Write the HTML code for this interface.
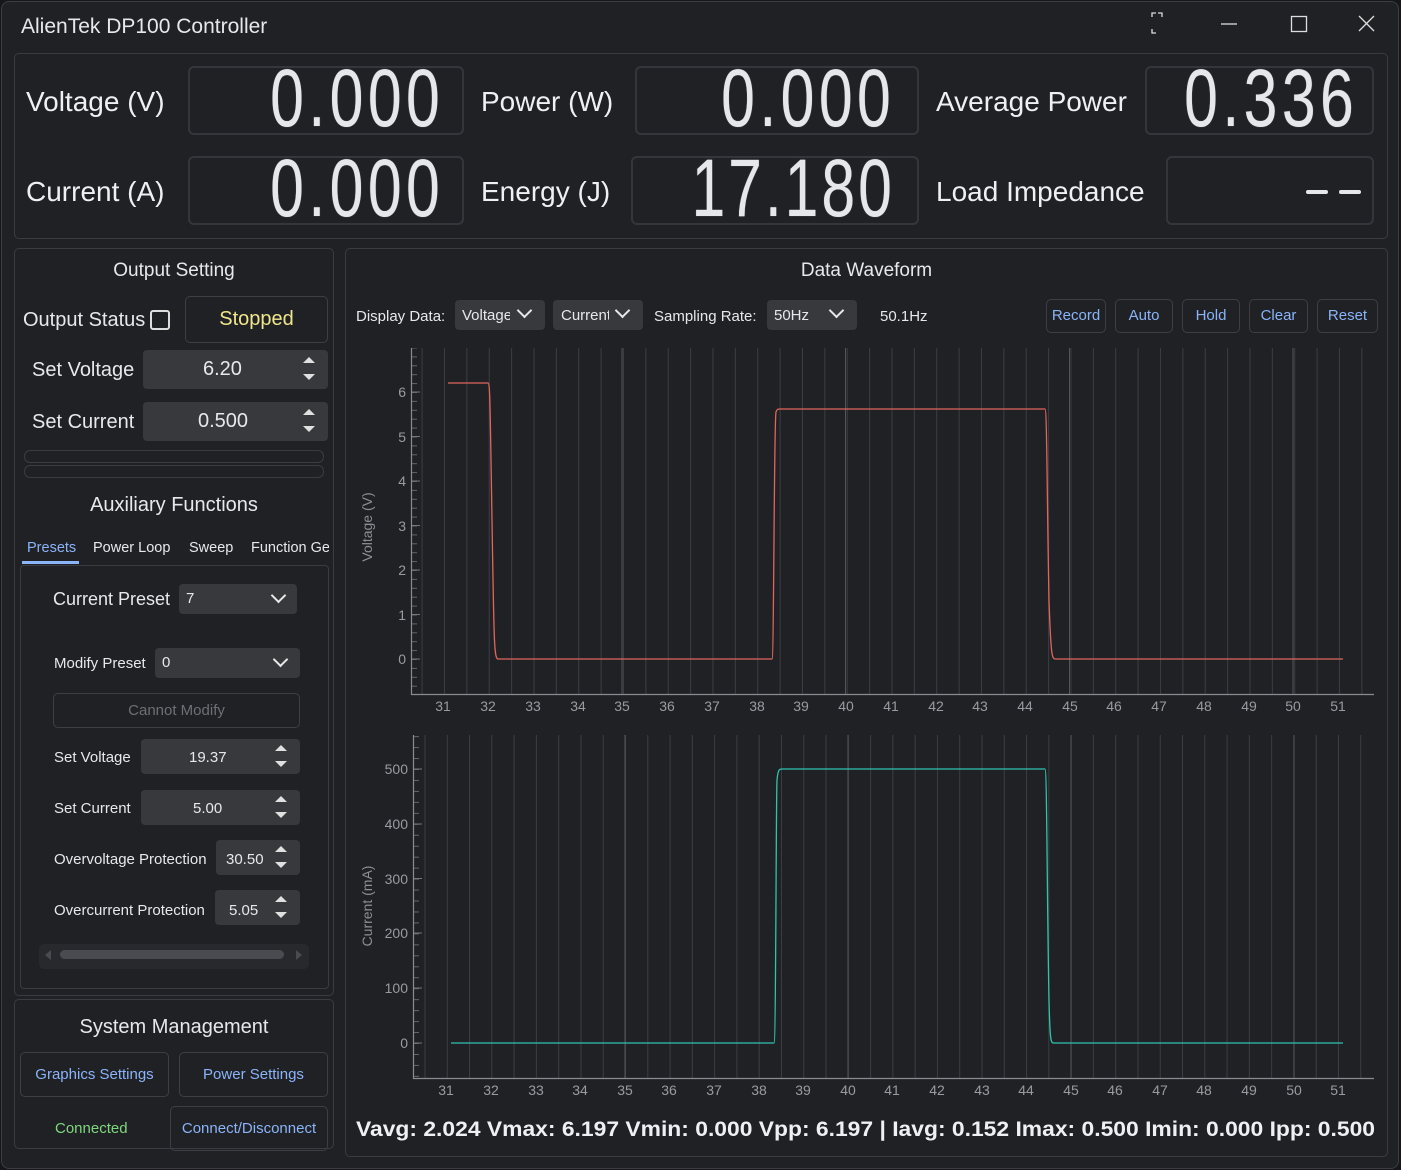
<!DOCTYPE html>
<html><head><meta charset="utf-8"><style>
*{box-sizing:border-box;margin:0;padding:0}
body{width:1401px;height:1170px;background:#16171a;font-family:"Liberation Sans",sans-serif;color:#e8e8ec;position:relative;overflow:hidden}
.win{position:absolute;left:1px;top:1px;width:1398px;height:1168px;background:#202125;border:1px solid #3c3d42;border-radius:8px}
.a{position:absolute;white-space:nowrap}
.box{position:absolute;border:1px solid #3b3c41;border-radius:5px}
.lcd{position:absolute;border:2px solid #35363b;border-radius:6px;overflow:hidden}
.dig{position:absolute;right:0;top:-10px;font-size:82px;line-height:1;color:#e6e7ea;transform:scaleX(.74);transform-origin:right top;letter-spacing:6px;text-shadow:0 0 1px #888}
.lbl{font-size:28px;color:#eef0f4}
.spin{position:absolute;background:#38393d;border-radius:4px}
.btn{position:absolute;border:1px solid #3e3f44;border-radius:5px;text-align:center;color:#8ab4f8;font-size:15px}
.arr{position:absolute;width:0;height:0;border-left:6px solid transparent;border-right:6px solid transparent}
.up{border-bottom:6px solid #e0e0e0}.dn{border-top:6px solid #e0e0e0}
.chev{position:absolute;width:11px;height:11px;border-right:2.5px solid #e8e8e8;border-bottom:2.5px solid #e8e8e8;transform:rotate(45deg)}
.combo{position:absolute;background:#38393d;border-radius:4px;color:#e8e8ec;font-size:15px}
</style></head><body>
<div class="win"></div>
<div class="a" style="left:21px;top:15px;font-size:21px">AlienTek DP100 Controller</div>
<svg class="a" style="left:1140px;top:10px" width="250" height="30">
<path d="M12 7 v-4 h4 M22 7 v-4 h-4 M12 19 v4 h4" fill="none" stroke="#ddd" stroke-width="1.3"/>
<line x1="81" y1="14" x2="97" y2="14" stroke="#ddd" stroke-width="1.3"/>
<rect x="151.5" y="6.5" width="15" height="15" fill="none" stroke="#ddd" stroke-width="1.3"/>
<path d="M219 6 L234 21 M234 6 L219 21" stroke="#ddd" stroke-width="1.3"/>
</svg>

<div class="box" style="left:14px;top:53px;width:1374px;height:186px"></div>
<div class="a lbl" style="left:26px;top:86px">Voltage (V)</div>
<div class="a lbl" style="left:26px;top:176px">Current (A)</div>
<div class="a lbl" style="left:481px;top:86px">Power (W)</div>
<div class="a lbl" style="left:481px;top:176px">Energy (J)</div>
<div class="a lbl" style="left:936px;top:86px">Average Power</div>
<div class="a lbl" style="left:936px;top:176px">Load Impedance</div>
<div class="lcd" style="left:188px;top:66px;width:276px;height:69px"><div class="dig" style="right:18px">0.000</div></div>
<div class="lcd" style="left:188px;top:156px;width:276px;height:69px"><div class="dig" style="right:18px">0.000</div></div>
<div class="lcd" style="left:635px;top:66px;width:284px;height:69px"><div class="dig" style="right:22px">0.000</div></div>
<div class="lcd" style="left:631px;top:156px;width:288px;height:69px"><div class="dig" style="right:22px;letter-spacing:4px">17.180</div></div>
<div class="lcd" style="left:1145px;top:66px;width:229px;height:69px"><div class="dig" style="right:14px">0.336</div></div>
<div class="lcd" style="left:1166px;top:156px;width:208px;height:69px">
<div class="a" style="left:138px;top:32px;width:22px;height:4px;background:#e6e7ea;border-radius:2px"></div>
<div class="a" style="left:171px;top:32px;width:22px;height:4px;background:#e6e7ea;border-radius:2px"></div></div>

<div class="box" style="left:14px;top:248px;width:320px;height:748px"></div>
<div class="a" style="left:14px;width:320px;text-align:center;top:260px;font-size:19px">Output Setting</div>
<div class="a" style="left:23px;top:309px;font-size:20px">Output Status</div>
<div class="a" style="left:150px;top:310px;width:20px;height:20px;border:2px solid #ddd;border-radius:3px"></div>
<div class="btn" style="left:185px;top:296px;width:143px;height:47px;line-height:45px;color:#f0e68c;font-size:20px">Stopped</div>
<div class="a" style="left:32px;top:359px;font-size:20px">Set Voltage</div>
<div class="spin" style="left:143px;top:350px;width:185px;height:39px"><div class="a" style="left:60px;top:8px;font-size:20px">6.20</div><div class="arr up" style="left:160px;top:7px"></div><div class="arr dn" style="left:160px;top:24px"></div></div>
<div class="a" style="left:32px;top:411px;font-size:20px">Set Current</div>
<div class="spin" style="left:143px;top:402px;width:185px;height:39px"><div class="a" style="left:55px;top:8px;font-size:20px">0.500</div><div class="arr up" style="left:160px;top:7px"></div><div class="arr dn" style="left:160px;top:24px"></div></div>
<div class="a" style="left:24px;top:450px;width:300px;height:13px;border:1px solid #3b3c41;border-radius:6px"></div>
<div class="a" style="left:24px;top:465px;width:300px;height:13px;border:1px solid #3b3c41;border-radius:6px"></div>
<div class="a" style="left:14px;width:320px;text-align:center;top:494px;font-size:20px">Auxiliary Functions</div>
<div class="a" style="left:27px;top:540px;font-size:14.5px;color:#8ab4f8">Presets</div>
<div class="a" style="left:22px;top:561px;width:57px;height:3px;background:#8ab4f8"></div>
<div class="a" style="left:93px;top:540px;font-size:14.5px">Power Loop</div>
<div class="a" style="left:189px;top:540px;font-size:14.5px">Sweep</div>
<div class="a" style="left:251px;top:540px;font-size:14.5px;width:78px;overflow:hidden">Function Ge</div>
<div class="a" style="left:20px;top:565px;width:309px;height:424px;border:1px solid #3b3c41;border-radius:4px"></div>
<div class="a" style="left:53px;top:589px;font-size:18px">Current Preset</div>
<div class="combo" style="left:179px;top:584px;width:118px;height:30px"><div class="a" style="left:7px;top:6px">7</div><div class="chev" style="left:94px;top:6px"></div></div>
<div class="a" style="left:54px;top:655px;font-size:15px">Modify Preset</div>
<div class="combo" style="left:155px;top:648px;width:145px;height:30px"><div class="a" style="left:7px;top:6px">0</div><div class="chev" style="left:120px;top:6px"></div></div>
<div class="btn" style="left:53px;top:693px;width:247px;height:35px;line-height:33px;color:#6e6f74">Cannot Modify</div>
<div class="a" style="left:54px;top:749px;font-size:15px">Set Voltage</div>
<div class="spin" style="left:141px;top:739px;width:159px;height:35px"><div class="a" style="left:48px;top:10px;font-size:15px">19.37</div><div class="arr up" style="left:134px;top:6px"></div><div class="arr dn" style="left:134px;top:22px"></div></div>
<div class="a" style="left:54px;top:800px;font-size:15px">Set Current</div>
<div class="spin" style="left:141px;top:790px;width:159px;height:35px"><div class="a" style="left:52px;top:10px;font-size:15px">5.00</div><div class="arr up" style="left:134px;top:6px"></div><div class="arr dn" style="left:134px;top:22px"></div></div>
<div class="a" style="left:54px;top:851px;font-size:15px">Overvoltage Protection</div>
<div class="spin" style="left:216px;top:840px;width:84px;height:35px"><div class="a" style="left:10px;top:11px;font-size:15px">30.50</div><div class="arr up" style="left:59px;top:6px"></div><div class="arr dn" style="left:59px;top:22px"></div></div>
<div class="a" style="left:54px;top:902px;font-size:15px">Overcurrent Protection</div>
<div class="spin" style="left:215px;top:890px;width:85px;height:35px"><div class="a" style="left:14px;top:12px;font-size:15px">5.05</div><div class="arr up" style="left:60px;top:6px"></div><div class="arr dn" style="left:60px;top:22px"></div></div>
<div class="a" style="left:39px;top:944px;width:270px;height:25px;background:#28292d;border-radius:5px">
<div class="a" style="left:21px;top:6px;width:224px;height:9px;background:#4a4b50;border-radius:5px"></div>
<div class="a" style="left:6px;top:6px;border-top:5px solid transparent;border-bottom:5px solid transparent;border-right:6px solid #4a4b50"></div>
<div class="a" style="left:257px;top:6px;border-top:5px solid transparent;border-bottom:5px solid transparent;border-left:6px solid #4a4b50"></div></div>

<div class="box" style="left:14px;top:999px;width:320px;height:150px"></div>
<div class="a" style="left:14px;width:320px;text-align:center;top:1016px;font-size:20px">System Management</div>
<div class="btn" style="left:20px;top:1052px;width:149px;height:45px;line-height:43px">Graphics Settings</div>
<div class="btn" style="left:179px;top:1052px;width:149px;height:45px;line-height:43px">Power Settings</div>
<div class="a" style="left:55px;top:1120px;font-size:15px;color:#7fd77f">Connected</div>
<div class="btn" style="left:170px;top:1106px;width:158px;height:45px;line-height:43px">Connect/Disconnect</div>

<div class="box" style="left:345px;top:248px;width:1043px;height:909px"></div>
<div class="a" style="left:345px;width:1043px;text-align:center;top:260px;font-size:19px">Data Waveform</div>
<div class="a" style="left:356px;top:308px;font-size:15px">Display Data:</div>
<div class="combo" style="left:455px;top:300px;width:90px;height:30px"><div class="a" style="left:7px;top:7px;width:48px;overflow:hidden">Voltage</div><div class="chev" style="left:64px;top:5px"></div></div>
<div class="combo" style="left:553px;top:300px;width:90px;height:30px"><div class="a" style="left:8px;top:7px;width:48px;overflow:hidden">Current</div><div class="chev" style="left:64px;top:5px"></div></div>
<div class="a" style="left:654px;top:308px;font-size:15px">Sampling Rate:</div>
<div class="combo" style="left:767px;top:300px;width:90px;height:30px"><div class="a" style="left:7px;top:7px">50Hz</div><div class="chev" style="left:64px;top:5px"></div></div>
<div class="a" style="left:880px;top:308px;font-size:15px">50.1Hz</div>
<div class="btn" style="left:1046px;top:299px;width:60px;height:34px;line-height:32px;overflow:hidden"><span style="display:inline-block;margin-left:-20px;margin-right:-20px">Record</span></div>
<div class="btn" style="left:1115px;top:299px;width:58px;height:34px;line-height:32px">Auto</div>
<div class="btn" style="left:1182px;top:299px;width:58px;height:34px;line-height:32px">Hold</div>
<div class="btn" style="left:1249px;top:299px;width:59px;height:34px;line-height:32px">Clear</div>
<div class="btn" style="left:1317px;top:299px;width:61px;height:34px;line-height:32px">Reset</div>

<svg class="a" style="left:0;top:0" width="1401" height="1170" font-family="Liberation Sans, sans-serif">
<defs>
<pattern id="g1" x="421.6" y="0" width="22.375" height="10" patternUnits="userSpaceOnUse"><line x1="0.5" y1="0" x2="0.5" y2="10" stroke="#3c3d42" stroke-width="1"/></pattern>
<pattern id="g2" x="424.5" y="0" width="22.28" height="10" patternUnits="userSpaceOnUse"><line x1="0.5" y1="0" x2="0.5" y2="10" stroke="#3c3d42" stroke-width="1"/></pattern>
<pattern id="t1" x="0" y="659" width="10" height="8.9" patternUnits="userSpaceOnUse"><line x1="0" y1="0.5" x2="10" y2="0.5" stroke="#666" stroke-width="1"/></pattern>
<pattern id="t2" x="0" y="1043" width="10" height="10.96" patternUnits="userSpaceOnUse"><line x1="0" y1="0.5" x2="10" y2="0.5" stroke="#666" stroke-width="1"/></pattern>
</defs>
<rect x="421" y="348" width="952" height="346" fill="url(#g1)"/>
<g stroke="#55565b"><line x1="622" y1="348" x2="622" y2="694"/><line x1="845.5" y1="348" x2="845.5" y2="694"/><line x1="1069.5" y1="348" x2="1069.5" y2="694"/><line x1="1293" y1="348" x2="1293" y2="694"/></g>
<rect x="412" y="348" width="5" height="346" fill="url(#t1)"/>
<g stroke="#777"><line x1="412" y1="659" x2="420" y2="659"/><line x1="412" y1="614.5" x2="420" y2="614.5"/><line x1="412" y1="570" x2="420" y2="570"/><line x1="412" y1="525.5" x2="420" y2="525.5"/><line x1="412" y1="481" x2="420" y2="481"/><line x1="412" y1="436.5" x2="420" y2="436.5"/><line x1="412" y1="392" x2="420" y2="392"/></g>
<path d="M411.5 348 V694.5 H1374" fill="none" stroke="#8a8b90" stroke-width="1.2"/>
<g fill="#9a9ba0" font-size="14" text-anchor="end"><text x="406" y="664">0</text><text x="406" y="620">1</text><text x="406" y="575">2</text><text x="406" y="531">3</text><text x="406" y="486">4</text><text x="406" y="442">5</text><text x="406" y="397">6</text></g>
<text transform="translate(372,527) rotate(-90)" fill="#8e8f94" font-size="14" text-anchor="middle">Voltage (V)</text>
<g fill="#9a9ba0" font-size="14" text-anchor="middle">
<text x="443" y="711">31</text><text x="488" y="711">32</text><text x="533" y="711">33</text><text x="578" y="711">34</text><text x="622" y="711">35</text><text x="667" y="711">36</text><text x="712" y="711">37</text><text x="757" y="711">38</text><text x="801" y="711">39</text><text x="846" y="711">40</text><text x="891" y="711">41</text><text x="936" y="711">42</text><text x="980" y="711">43</text><text x="1025" y="711">44</text><text x="1070" y="711">45</text><text x="1114" y="711">46</text><text x="1159" y="711">47</text><text x="1204" y="711">48</text><text x="1249" y="711">49</text><text x="1293" y="711">50</text><text x="1338" y="711">51</text></g>
<path d="M448 383 H488 C490 383 490 400 492 520 C494 640 494 659 498 659 H772 C774 659 774 420 776 412 C777 409 778 409 780 409 H1045 C1047 409 1047 500 1049 600 C1051 659 1052 659 1056 659 H1343" fill="none" stroke="#e0665c" stroke-width="1.3"/>
<rect x="424" y="735" width="949" height="343" fill="url(#g2)"/>
<g stroke="#55565b"><line x1="625" y1="735" x2="625" y2="1078"/><line x1="848" y1="735" x2="848" y2="1078"/><line x1="1071" y1="735" x2="1071" y2="1078"/><line x1="1294" y1="735" x2="1294" y2="1078"/></g>
<rect x="414" y="735" width="5" height="343" fill="url(#t2)"/>
<g stroke="#777"><line x1="414" y1="1043" x2="422" y2="1043"/><line x1="414" y1="988" x2="422" y2="988"/><line x1="414" y1="933" x2="422" y2="933"/><line x1="414" y1="878.5" x2="422" y2="878.5"/><line x1="414" y1="824" x2="422" y2="824"/><line x1="414" y1="769" x2="422" y2="769"/></g>
<path d="M413.5 735 V1078.5 H1374" fill="none" stroke="#8a8b90" stroke-width="1.2"/>
<g fill="#9a9ba0" font-size="14" text-anchor="end"><text x="408" y="1048">0</text><text x="408" y="993">100</text><text x="408" y="938">200</text><text x="408" y="884">300</text><text x="408" y="829">400</text><text x="408" y="774">500</text></g>
<text transform="translate(372,906) rotate(-90)" fill="#8e8f94" font-size="14" text-anchor="middle">Current (mA)</text>
<g fill="#9a9ba0" font-size="14" text-anchor="middle">
<text x="446" y="1095">31</text><text x="491" y="1095">32</text><text x="536" y="1095">33</text><text x="580" y="1095">34</text><text x="625" y="1095">35</text><text x="669" y="1095">36</text><text x="714" y="1095">37</text><text x="759" y="1095">38</text><text x="803" y="1095">39</text><text x="848" y="1095">40</text><text x="892" y="1095">41</text><text x="937" y="1095">42</text><text x="982" y="1095">43</text><text x="1026" y="1095">44</text><text x="1071" y="1095">45</text><text x="1115" y="1095">46</text><text x="1160" y="1095">47</text><text x="1204" y="1095">48</text><text x="1249" y="1095">49</text><text x="1294" y="1095">50</text><text x="1338" y="1095">51</text></g>
<path d="M451 1043 H774 C776 1043 776 800 777 780 C778 770 779 769 782 769 H1045 C1047 769 1047 900 1049 1000 C1050 1043 1051 1043 1054 1043 H1343" fill="none" stroke="#2ec4b0" stroke-width="1.3"/>
<text x="356" y="1136" fill="#eef0f4" font-size="21" font-weight="bold" textLength="1019" lengthAdjust="spacingAndGlyphs">Vavg: 2.024  Vmax: 6.197  Vmin: 0.000  Vpp: 6.197  |  Iavg: 0.152  Imax: 0.500  Imin: 0.000  Ipp: 0.500</text>
</svg>
</body></html>
